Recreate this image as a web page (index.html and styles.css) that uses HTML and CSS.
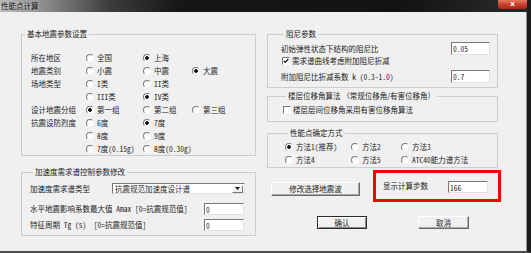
FILE: index.html
```html
<!DOCTYPE html>
<html lang="zh">
<head>
    <meta charset="UTF-8">
    <title>性能点计算</title>
    <link rel="stylesheet" href="styles.css">
</head>
<body>
<div class="window">
    <div class="titlebar">
        <span class="title">性能点计算</span>
        <span class="close">x</span>
    </div>
    <div class="client">
        <div class="col-left">
            <fieldset class="group basic">
                <legend>基本地震参数设置</legend>
                <div class="grid">
                    <span>所在地区</span>
                    <label class="opt"><i class="rb"></i>全国</label>
                    <label class="opt"><i class="rb on"></i>上海</label>
                    <span></span>

                    <span>地震类别</span>
                    <label class="opt"><i class="rb"></i>小震</label>
                    <label class="opt"><i class="rb"></i>中震</label>
                    <label class="opt"><i class="rb on"></i>大震</label>

                    <span>场地类型</span>
                    <label class="opt"><i class="rb"></i>I类</label>
                    <label class="opt"><i class="rb"></i>II类</label>
                    <span></span>

                    <span></span>
                    <label class="opt"><i class="rb"></i>III类</label>
                    <label class="opt"><i class="rb on"></i>IV类</label>
                    <span></span>

                    <span>设计地震分组</span>
                    <label class="opt"><i class="rb on"></i>第一组</label>
                    <label class="opt"><i class="rb"></i>第二组</label>
                    <label class="opt"><i class="rb"></i>第三组</label>

                    <span>抗震设防烈度</span>
                    <label class="opt"><i class="rb"></i>6度</label>
                    <label class="opt"><i class="rb on"></i>7度</label>
                    <span></span>

                    <span></span>
                    <label class="opt"><i class="rb"></i>8度</label>
                    <label class="opt"><i class="rb"></i>9度</label>
                    <span></span>

                    <span></span>
                    <label class="opt"><i class="rb"></i>7度(0.15g)</label>
                    <label class="opt"><i class="rb"></i>8度(0.30g)</label>
                    <span></span>
                </div>
            </fieldset>

            <fieldset class="group accel">
                <legend>加速度需求谱控制参数修改</legend>
                <div class="row a1">
                    <span>加速度需求谱类型</span>
                    <div class="combo">
                        <span>抗震规范加速度设计谱</span>
                        <i class="arrow"><svg width="5" height="3" viewBox="0 0 5 3"><path d="M0 0h5L2.5 3z" fill="#111"/></svg></i>
                    </div>
                </div>
                <div class="row a2">
                    <span>水平地震影响系数最大值 Amax [0=抗震规范值]</span>
                    <input class="field" value="0">
                </div>
                <div class="row a3">
                    <span>特征周期 Tg (s)&nbsp; [0=抗震规范值]</span>
                    <input class="field" value="0">
                </div>
            </fieldset>
        </div>

        <div class="col-right">
            <fieldset class="group damp">
                <legend>阻尼参数</legend>
                <div class="row r1">
                    <span>初始弹性状态下结构的阻尼比</span>
                    <input class="field" value="0.05">
                </div>
                <label class="check-row">
                    <i class="cb"><svg width="6" height="6" viewBox="0 0 6 6"><path d="M0.8 2.8l1.5 1.6 3-3.4" fill="none" stroke="#111" stroke-width="1.2"/></svg></i>
                    需求谱曲线考虑附加阻尼折减
                </label>
                <div class="row r3">
                    <span>附加阻尼比折减系数 k (0.3-1.0)</span>
                    <input class="field" value="0.7">
                </div>
            </fieldset>

            <fieldset class="group drift">
                <legend>楼层位移角算法 （常规位移角/有害位移角）</legend>
                <label class="check-row"><i class="cb"></i>楼层层间位移角采用有害位移角算法</label>
            </fieldset>

            <fieldset class="group perf">
                <legend>性能点确定方式</legend>
                <div class="grid">
                    <label class="opt"><i class="rb on"></i>方法1(推荐)</label>
                    <label class="opt"><i class="rb"></i>方法2</label>
                    <label class="opt"><i class="rb"></i>方法3</label>
                    <label class="opt"><i class="rb"></i>方法4</label>
                    <label class="opt"><i class="rb"></i>方法5</label>
                    <label class="opt"><i class="rb"></i>ATC40能力谱方法</label>
                </div>
            </fieldset>

            <div class="step-row">
                <button class="btn wave">修改选择地震波</button>
                <div class="highlight">
                    <span>显示计算步数</span>
                    <input class="field" value="166">
                </div>
            </div>

            <div class="actions">
                <button class="btn default">确认</button>
                <button class="btn cancel">取消</button>
            </div>
        </div>
    </div>
</div>
</body>
</html>
```

FILE: styles.css
```css
* {
    box-sizing: border-box;
}

body {
    margin: 0;
    background-color: #f0f0f0;
    font-family: "Noto Sans CJK SC", "Noto Sans", sans-serif;
    font-size: 7.5px;
    line-height: 10px;
    color: #1b1b1b;
    /* SimSun style half-width latin */
    font-feature-settings: "hwid";
}

.window {
    width: 531px;
    height: 253px;
    display: flex;
    flex-direction: column;
    background-color: #f0f0f0;
    border-right: 4px solid #1c1c1c;
    border-bottom: 2px solid #4d4d4d;
    overflow: hidden;
}

.titlebar {
    height: 12px;
    flex: none;
    display: flex;
    align-items: flex-start;
    background: linear-gradient(to right, #b8b8b8 0, #8c8c8c 45px, #3c3c3c 110px, #161616 180px, #121212 400px, #262626 497px);
}

.title {
    padding-left: 1px;
    line-height: 11px;
    color: #111;
    text-shadow: 0 0 3px rgba(255, 255, 255, 0.6);
}

.close {
    margin-left: auto;
    width: 29px;
    height: 9px;
    background: linear-gradient(#e27a66, #c83c27 55%, #a9291a);
    border-radius: 0 0 3px 3px;
    color: #fff;
    font: bold 7px/8px "DejaVu Sans", sans-serif;
    text-align: center;
}

.client {
    flex: 1;
    display: flex;
    gap: 11px;
    padding: 17px 0 0 21px;
    border-right: 1px solid #8f8f8f;
}

.col-left {
    width: 235px;
    display: flex;
    flex-direction: column;
}

.col-right {
    width: 231px;
    display: flex;
    flex-direction: column;
}

/* group boxes */
.group {
    margin: 0;
    padding: 0;
    min-width: 0;
    border: 1px solid #cdcdcd;
}

.group legend {
    margin-left: 3px;
    padding: 0 2px;
    height: 10px;
    line-height: 10px;
}

.drift legend {
    font-feature-settings: normal;
}

.grid {
    display: grid;
    grid-auto-rows: 13px;
    align-items: center;
}

.basic .grid {
    grid-template-columns: 55px 57px 49px 1fr;
    padding: 12px 0 0 9px;
}

.opt {
    display: flex;
    align-items: center;
    gap: 3px;
    white-space: nowrap;
}

.rb {
    flex: none;
    width: 8px;
    height: 8px;
    border-radius: 50%;
    border: 1px solid;
    border-color: #7b7b7b #f6f6f6 #f6f6f6 #7b7b7b;
    background: #fff;
}

.rb.on {
    background: radial-gradient(circle, #111 0 1.5px, #fff 2.2px);
}

.cb {
    flex: none;
    width: 8px;
    height: 8px;
    display: flex;
    align-items: center;
    justify-content: center;
    border: 1px solid;
    border-color: #7b7b7b #fafafa #fafafa #7b7b7b;
    background: #fff;
}

.check-row {
    height: 12px;
    display: flex;
    align-items: center;
    gap: 2px;
    white-space: nowrap;
}

.row {
    display: flex;
    align-items: center;
    justify-content: space-between;
    white-space: nowrap;
}

.field {
    height: 13px;
    width: 39px;
    margin: 0;
    padding: 0 1px;
    border: 1px solid;
    border-color: #787878 #e2e2e2 #e2e2e2 #787878;
    background: #fff;
    font: inherit;
    font-feature-settings: "hwid";
    line-height: 11px;
    color: #222;
}

/* 阻尼参数 */
.damp {
    padding: 0 7px 4px 13px;
}

.damp .r1,
.damp .r3 {
    margin-top: 3px;
}

.damp .check-row {
    padding-left: 1px;
}

/* 楼层位移角 */
.drift {
    margin-top: 3px;
    padding: 3px 0 5px 15px;
}

/* 性能点 */
.perf {
    margin-top: 6px;
    padding: 2px 0 1px 17px;
}

.perf .grid {
    grid-template-columns: 66px 50px 1fr;
}

/* 加速度需求谱 */
.accel {
    margin-top: 11px;
    padding: 0 10px 4px 8px;
}

.accel .a1 {
    margin-top: 6px;
}

.accel .a2 {
    margin-top: 9px;
}

.accel .a3 {
    margin-top: 4px;
}

.accel .field {
    width: 40px;
    height: 12px;
    margin-right: 1px;
}

.combo {
    width: 133px;
    height: 11px;
    display: flex;
    align-items: center;
    justify-content: space-between;
    padding: 0 1px 0 2px;
    border: 1px solid;
    border-color: #787878 #e2e2e2 #e2e2e2 #787878;
    background: #fff;
}

.arrow {
    width: 11px;
    height: 8px;
    display: flex;
    align-items: center;
    justify-content: center;
    background: #f0f0f0;
    border: 1px solid;
    border-color: #fff #777 #777 #fff;
}

/* buttons */
.btn {
    margin: 0;
    padding: 0;
    font: inherit;
    font-feature-settings: "hwid";
    line-height: 10px;
    color: #1b1b1b;
    background: #f0f0f0;
    border: 1px solid;
    border-color: #fff #6a6a6a #6a6a6a #fff;
    box-shadow: inset -1px -1px 0 #a8a8a8;
}

.step-row {
    display: flex;
    align-items: flex-start;
    gap: 13px;
    margin: 2px -3px 0 0;
    padding-left: 4px;
}

.wave {
    width: 89px;
    height: 14px;
    margin-top: 12px;
}

.highlight {
    width: 128px;
    height: 32px;
    display: flex;
    align-items: center;
    justify-content: space-between;
    padding: 0 10px 0 7px;
    border: 3px solid #ff0000;
}

.highlight .field {
    width: 40px;
    height: 12px;
    margin-top: 2px;
}

.actions {
    display: flex;
    gap: 51px;
    margin-top: 14px;
    padding-left: 50px;
}

.actions .btn {
    width: 50px;
    height: 13px;
}

.actions .cancel {
    width: 51px;
}

.btn.default {
    border-color: #2a2a2a;
    box-shadow: inset 1px 1px 0 #fff, inset -1px -1px 0 #8a8a8a;
}
```
